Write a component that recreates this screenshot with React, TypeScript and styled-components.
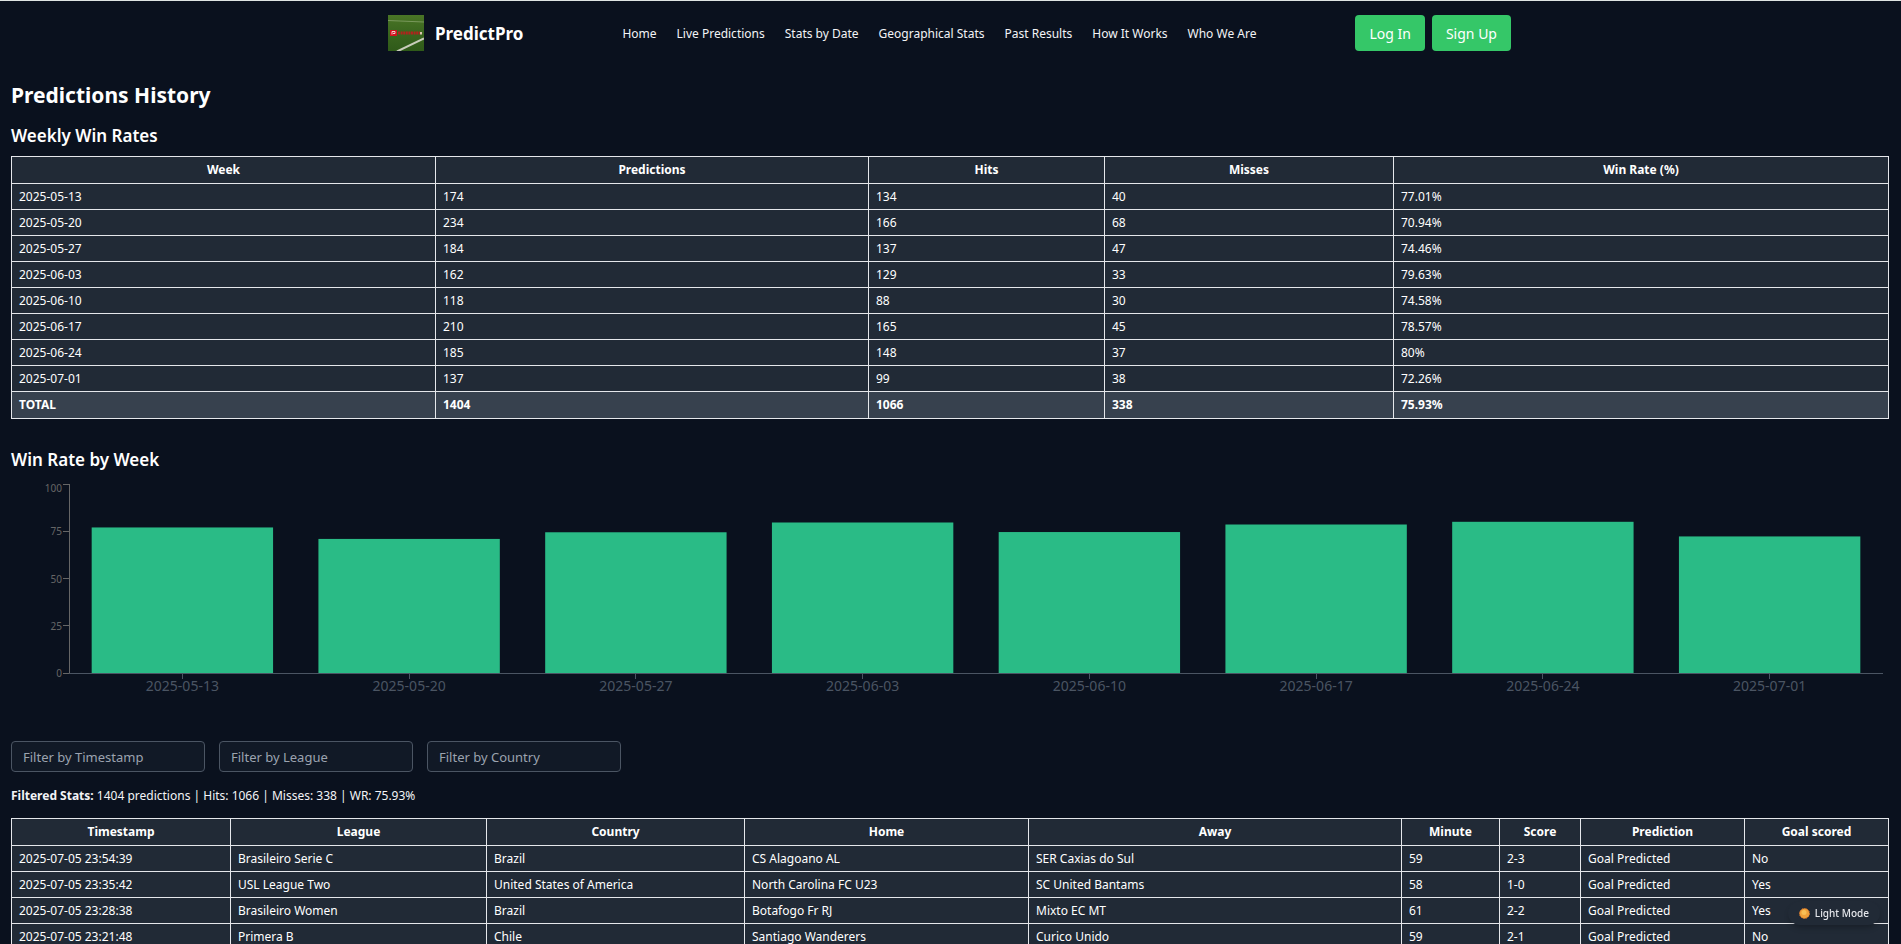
import React, { useLayoutEffect, useRef, useState } from "react";
import styled, { createGlobalStyle } from "styled-components";

const GlobalStyle = createGlobalStyle`
  *, *::before, *::after { box-sizing: border-box; }
  html { scrollbar-width: none; }
  body {
    margin: 0;
    background: #0a111e;
    color: #ffffff;
    font-family: "Noto Sans", "Open Sans", sans-serif;
    font-size: 12px;
    line-height: 18px;
  }
  h1, h2, p { margin: 0; }
`;

const Page = styled.div`
  padding-right: 2px;
  border-top: 1px solid #dfe5e3;
`;

const Header = styled.header`
  display: flex;
  justify-content: space-between;
  align-items: center;
  max-width: 1123px;
  margin: 0 auto;
  padding: 14px 0;
`;

const Brand = styled.a`
  display: flex;
  align-items: center;
  gap: 11px;
  color: #ffffff;
  font-size: 17px;
  font-weight: 700;
  line-height: 24px;
  text-decoration: none;
`;

const BrandName = styled.span`
  padding-top: 2px;
`;

const Nav = styled.nav`
  display: flex;
  gap: 20px;
  padding-top: 2px;
`;

const NavLink = styled.a`
  color: #f3f4f6;
  text-decoration: none;
`;

const Actions = styled.div`
  display: flex;
  gap: 7px;
`;

const ActionButton = styled.button`
  height: 36px;
  padding: 2px 14px 0;
  border: 0;
  border-radius: 4px;
  background: #35c768;
  color: #ffffff;
  font: inherit;
  font-size: 14px;
`;

const Main = styled.main`
  padding: 14px 11px 0 11px;
`;

const Title = styled.h1`
  font-size: 21px;
  line-height: 32px;
`;

const SectionTitle = styled.h2`
  font-size: 17px;
  font-weight: 600;
  line-height: 26px;
`;

const Section = styled.section`
  margin-top: 12px;
`;

const ChartSection = styled.section`
  margin-top: 28px;
`;

const DataTable = styled.table`
  width: 100%;
  margin-top: 7px;
  border-collapse: collapse;
  table-layout: fixed;
  background: #212a36;
`;

const Col = styled.col<{ $width: number }>`
  width: ${(p) => p.$width}px;
`;

const HeadCell = styled.th`
  height: 27px;
  padding: 0 7px;
  border: 1px solid #e5e7eb;
  text-align: center;
  font-weight: 700;
`;

const Cell = styled.td`
  height: 26px;
  padding: 0 7px;
  border: 1px solid #e5e7eb;
  white-space: nowrap;
`;

const TotalCell = styled(Cell)`
  height: 27px;
  background: #37414e;
  font-weight: 700;
`;

const ChartBox = styled.div`
  height: 240px;
  margin-top: 5px;
`;

const ChartSvg = styled.svg`
  display: block;
  width: 100%;
  height: 240px;
`;

const AxisLine = styled.line<{ $color: string }>`
  stroke: ${(p) => p.$color};
  stroke-width: 1;
  shape-rendering: crispEdges;
`;

const YLabel = styled.text`
  fill: #666666;
  font-size: 10px;
  text-anchor: end;
`;

const XLabel = styled.text`
  fill: #4b5563;
  font-size: 14px;
  text-anchor: middle;
`;

const Filters = styled.div`
  display: flex;
  gap: 14px;
  margin-top: 23px;
`;

const FilterInput = styled.input`
  width: 194px;
  height: 31px;
  padding: 0 11px;
  border: 1px solid #4b5563;
  border-radius: 4px;
  background: #111926;
  color: #ffffff;
  font: inherit;
  font-size: 13px;
  &::placeholder { color: #9ca3af; opacity: 1; }
`;

const Stats = styled.p`
  margin-top: 15px;
  color: #f3f4f6;
`;

const ResultsTable = styled(DataTable)`
  margin-top: 13px;
`;

const ModeButton = styled.button`
  position: fixed;
  right: 21px;
  bottom: 19px;
  display: flex;
  align-items: center;
  gap: 5px;
  height: 24px;
  padding: 0 11px;
  border: 0;
  border-radius: 12px;
  background: #212a36;
  color: #e5e7eb;
  font: inherit;
  font-size: 10px;
  font-weight: 500;
  box-shadow: 0 4px 6px -2px rgba(0, 0, 0, 0.3);
`;

const navItems = ["Home", "Live Predictions", "Stats by Date", "Geographical Stats", "Past Results", "How It Works", "Who We Are"];

const weeks = [
  { week: "2025-05-13", predictions: 174, hits: 134, misses: 40, rate: 77.01 },
  { week: "2025-05-20", predictions: 234, hits: 166, misses: 68, rate: 70.94 },
  { week: "2025-05-27", predictions: 184, hits: 137, misses: 47, rate: 74.46 },
  { week: "2025-06-03", predictions: 162, hits: 129, misses: 33, rate: 79.63 },
  { week: "2025-06-10", predictions: 118, hits: 88, misses: 30, rate: 74.58 },
  { week: "2025-06-17", predictions: 210, hits: 165, misses: 45, rate: 78.57 },
  { week: "2025-06-24", predictions: 185, hits: 148, misses: 37, rate: 80 },
  { week: "2025-07-01", predictions: 137, hits: 99, misses: 38, rate: 72.26 },
];

// Column widths are shares: the fixed table layout scales them to the full table width.
const weekColumns = [
  { label: "Week", width: 424 },
  { label: "Predictions", width: 433 },
  { label: "Hits", width: 236 },
  { label: "Misses", width: 289 },
  { label: "Win Rate (%)", width: 495 },
];

const resultColumns = [
  { label: "Timestamp", width: 219 },
  { label: "League", width: 256 },
  { label: "Country", width: 258 },
  { label: "Home", width: 284 },
  { label: "Away", width: 373 },
  { label: "Minute", width: 98 },
  { label: "Score", width: 81 },
  { label: "Prediction", width: 164 },
  { label: "Goal scored", width: 144 },
];

const results = [
  ["2025-07-05 23:54:39", "Brasileiro Serie C", "Brazil", "CS Alagoano AL", "SER Caxias do Sul", "59", "2-3", "Goal Predicted", "No"],
  ["2025-07-05 23:35:42", "USL League Two", "United States of America", "North Carolina FC U23", "SC United Bantams", "58", "1-0", "Goal Predicted", "Yes"],
  ["2025-07-05 23:28:38", "Brasileiro Women", "Brazil", "Botafogo Fr RJ", "Mixto EC MT", "61", "2-2", "Goal Predicted", "Yes"],
  ["2025-07-05 23:21:48", "Primera B", "Chile", "Santiago Wanderers", "Curico Unido", "59", "2-1", "Goal Predicted", "No"],
];

function Logo() {
  return (
    <svg width="36" height="36" viewBox="0 0 36 36" aria-hidden="true">
      <defs>
        <linearGradient id="grass" x1="0" y1="0" x2="0" y2="1">
          <stop offset="0" stopColor="#4a7526" />
          <stop offset="0.45" stopColor="#3b671f" />
          <stop offset="1" stopColor="#2f5a19" />
        </linearGradient>
      </defs>
      <rect width="36" height="36" fill="url(#grass)" />
      <path d="M0 5.500L36 7" stroke="#7f9d62" strokeWidth="0.900" />
      <path d="M9 36.500L36 23.500" stroke="#c9cdbb" strokeWidth="2" />
      <rect x="2" y="15" width="7" height="6" fill="#d5121f" />
      <path d="M4 19.500V16.500H7V18.500H5" stroke="#f4dede" strokeWidth="0.900" fill="none" />
      <path d="M10 18H32" stroke="#b0231c" strokeWidth="3" strokeDasharray="2 0.600" />
      <rect x="32" y="17" width="2" height="2.500" fill="#d9c3b0" />
    </svg>
  );
}

const LEFT = 58;
const TOP = 6;
const PLOT = 189;

function WinRateChart() {
  const box = useRef<HTMLDivElement>(null);
  const [width, setWidth] = useState(1877);
  useLayoutEffect(() => {
    const el = box.current;
    if (!el) return;
    const measure = () => setWidth(el.clientWidth);
    measure();
    const observer = new ResizeObserver(measure);
    observer.observe(el);
    return () => observer.disconnect();
  }, []);

  const right = width - 5;
  const band = (right - LEFT) / weeks.length;
  const base = TOP + PLOT;

  return (
    <ChartBox ref={box}>
      <ChartSvg role="img" aria-label="Win rate by week">
        {weeks.map((w, i) => {
          const x = LEFT + band * i;
          const h = (w.rate / 100) * PLOT;
          return (
            <g key={w.week}>
              <AxisLine $color="#4b5563" x1={x + band / 2} x2={x + band / 2} y1={base} y2={base + 6} />
              <rect x={x + band * 0.1} y={base - h} width={band * 0.8} height={h} fill="#2abb86" />
              <XLabel x={x + band / 2} y={base + 18}>{w.week}</XLabel>
            </g>
          );
        })}
        <AxisLine $color="#4b5563" x1={LEFT} x2={right} y1={base} y2={base} />
        <AxisLine $color="#666666" x1={LEFT} x2={LEFT} y1={TOP} y2={base} />
        {[0, 25, 50, 75, 100].map((t) => {
          const y = base - (t / 100) * PLOT;
          return (
            <g key={t}>
              <AxisLine $color="#666666" x1={LEFT - 6} x2={LEFT} y1={y} y2={y} />
              <YLabel x={LEFT - 7} y={Math.max(y, 10) + 4}>{t}</YLabel>
            </g>
          );
        })}
      </ChartSvg>
    </ChartBox>
  );
}

export default function App() {
  return (
    <>
      <GlobalStyle />
      <Page>
        <Header>
          <Brand href="#">
            <Logo />
            <BrandName>PredictPro</BrandName>
          </Brand>
          <Nav>
            {navItems.map((item) => (
              <NavLink key={item} href="#">{item}</NavLink>
            ))}
          </Nav>
          <Actions>
            <ActionButton type="button">Log In</ActionButton>
            <ActionButton type="button">Sign Up</ActionButton>
          </Actions>
        </Header>
        <Main>
          <Title>Predictions History</Title>
          <Section>
            <SectionTitle>Weekly Win Rates</SectionTitle>
            <DataTable>
              <colgroup>
                {weekColumns.map((c) => <Col key={c.label} $width={c.width} />)}
              </colgroup>
              <thead>
                <tr>{weekColumns.map((c) => <HeadCell key={c.label} scope="col">{c.label}</HeadCell>)}</tr>
              </thead>
              <tbody>
                {weeks.map((w) => (
                  <tr key={w.week}>
                    <Cell>{w.week}</Cell>
                    <Cell>{w.predictions}</Cell>
                    <Cell>{w.hits}</Cell>
                    <Cell>{w.misses}</Cell>
                    <Cell>{`${w.rate}%`}</Cell>
                  </tr>
                ))}
                <tr>
                  <TotalCell>TOTAL</TotalCell>
                  <TotalCell>1404</TotalCell>
                  <TotalCell>1066</TotalCell>
                  <TotalCell>338</TotalCell>
                  <TotalCell>75.93%</TotalCell>
                </tr>
              </tbody>
            </DataTable>
          </Section>
          <ChartSection>
            <SectionTitle>Win Rate by Week</SectionTitle>
            <WinRateChart />
          </ChartSection>
          <Filters>
            <FilterInput type="text" aria-label="Filter by Timestamp" placeholder="Filter by Timestamp" />
            <FilterInput type="text" aria-label="Filter by League" placeholder="Filter by League" />
            <FilterInput type="text" aria-label="Filter by Country" placeholder="Filter by Country" />
          </Filters>
          <Stats>
            <strong>Filtered Stats:</strong> 1404 predictions | Hits: 1066 | Misses: 338 | WR: 75.93%
          </Stats>
          <ResultsTable>
            <colgroup>
              {resultColumns.map((c) => <Col key={c.label} $width={c.width} />)}
            </colgroup>
            <thead>
              <tr>{resultColumns.map((c) => <HeadCell key={c.label} scope="col">{c.label}</HeadCell>)}</tr>
            </thead>
            <tbody>
              {results.map((row) => (
                <tr key={row[0]}>
                  {row.map((value, i) => <Cell key={i}>{value}</Cell>)}
                </tr>
              ))}
            </tbody>
          </ResultsTable>
        </Main>
        <ModeButton type="button">
          <svg width="11" height="11" viewBox="0 0 11 11" aria-hidden="true">
            <circle cx="5.500" cy="5.500" r="5" fill="#f0a13a" stroke="#d9752b" strokeWidth="1" strokeDasharray="1.500 1" />
            <circle cx="5" cy="4.500" r="2.500" fill="#f9bf55" />
          </svg>
          Light Mode
        </ModeButton>
      </Page>
    </>
  );
}
